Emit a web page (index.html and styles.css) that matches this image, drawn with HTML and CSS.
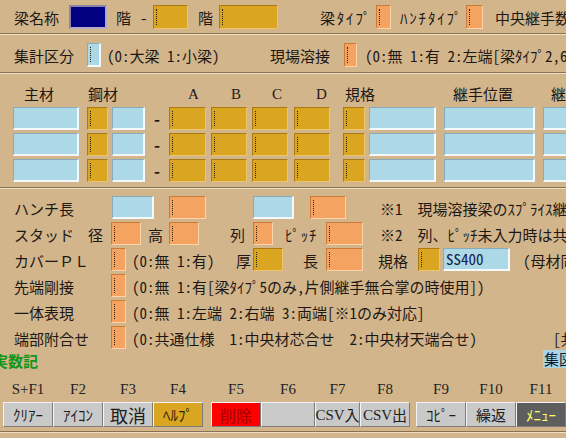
FILE: index.html
```html
<!DOCTYPE html>
<html lang="ja">
<head>
<meta charset="utf-8">
<title>梁名称</title>
<link rel="stylesheet" href="styles.css">
</head>
<body>
<div class="screen">
  <div class="row r1">
    <span class="txt w55">梁名称</span>
    <span class="box nv w38"></span>
    <span class="txt w33 pl9">階</span>
    <span class="txt w13">-</span>
    <span class="box gd c w35"></span>
    <span class="txt w31 pl10">階</span>
    <span class="box gd c w59"></span>
    <span class="txt w98 pl42 hk">梁ﾀｲﾌﾟ</span>
    <span class="box or c w15"></span>
    <span class="txt w75 pl9 hk">ﾊﾝﾁﾀｲﾌﾟ</span>
    <span class="box or c w17"></span>
    <span class="txt pl12">中央継手数</span>
  </div>
  <div class="sep s1"></div>
  <div class="row r2">
    <span class="txt w73">集計区分</span>
    <span class="box lb c w14"></span>
    <span class="txt w169 pl6">(0:大梁 1:小梁)</span>
    <span class="txt w74">現場溶接</span>
    <span class="box or c w13"></span>
    <span class="txt pl8">(0:無 1:有 2:左端[梁ﾀｲﾌﾟ2,6のみ] 3:右端)</span>
  </div>
  <div class="sep s2"></div>
  <div class="hdr">
    <span class="w64">主材</span>
    <span class="w100">鋼材</span>
    <span class="w43 ser">A</span>
    <span class="w41 ser">B</span>
    <span class="w44 ser">C</span>
    <span class="w29 ser">D</span>
    <span class="w108">規格</span>
    <span class="w98">継手位置</span>
    <span>継手</span>
  </div>
  <div class="inputs">
    <div class="row irow">
      <span class="box lb w66"></span>
      <span class="box gd c w21 ml8"></span>
      <span class="box lb w33 ml4"></span>
      <span class="txt w24 dash">-</span>
      <span class="box gd c w37"></span>
      <span class="box gd c w36 ml5"></span>
      <span class="box gd c w36 ml5"></span>
      <span class="box gd c w36 ml6"></span>
      <span class="box gd c w22 ml13"></span>
      <span class="box lb w67 ml4"></span>
      <span class="box lb w91 ml8"></span>
      <span class="box lb w40 ml8"></span>
    </div>
    <div class="row irow">
      <span class="box lb w66"></span>
      <span class="box gd c w21 ml8"></span>
      <span class="box lb w33 ml4"></span>
      <span class="txt w24 dash">-</span>
      <span class="box gd c w37"></span>
      <span class="box gd c w36 ml5"></span>
      <span class="box gd c w36 ml5"></span>
      <span class="box gd c w36 ml6"></span>
      <span class="box gd c w22 ml13"></span>
      <span class="box lb w67 ml4"></span>
      <span class="box lb w91 ml8"></span>
      <span class="box lb w40 ml8"></span>
    </div>
    <div class="row irow">
      <span class="box lb w66"></span>
      <span class="box gd c w21 ml8"></span>
      <span class="box lb w33 ml4"></span>
      <span class="txt w24 dash">-</span>
      <span class="box gd c w37"></span>
      <span class="box gd c w36 ml5"></span>
      <span class="box gd c w36 ml5"></span>
      <span class="box gd c w36 ml6"></span>
      <span class="box gd c w22 ml13"></span>
      <span class="box lb w67 ml4"></span>
      <span class="box lb w91 ml8"></span>
      <span class="box lb w40 ml8"></span>
    </div>
  </div>
  <div class="sep s3"></div>
  <div class="form">
    <div class="row frow">
      <span class="txt w98">ハンチ長</span>
      <span class="box lb w42"></span>
      <span class="box or c w37 ml15"></span>
      <span class="box lb w41 ml47"></span>
      <span class="box or c w36 ml16"></span>
      <span class="txt pl34">※1<span class="fw">　</span>現場溶接梁のｽﾌﾟﾗｲｽ継手</span>
    </div>
    <div class="row frow">
      <span class="txt w74">スタッド</span>
      <span class="txt w23">径</span>
      <span class="box or c w30"></span>
      <span class="txt w28 pl7">高</span>
      <span class="box or c w30"></span>
      <span class="txt w54 pl31">列</span>
      <span class="box or c w20"></span>
      <span class="txt w53 pl12 hk2">ﾋﾟｯﾁ</span>
      <span class="box or c w37"></span>
      <span class="txt pl17">※2<span class="fw">　</span>列、ﾋﾟｯﾁ未入力時は共通</span>
    </div>
    <div class="row frow">
      <span class="txt w97">カバー<span class="fw">ＰＬ</span></span>
      <span class="box or c w15"></span>
      <span class="txt w110 pl6">(0:無 1:有)</span>
      <span class="txt w17">厚</span>
      <span class="box gd c w30"></span>
      <span class="txt w43 pl20">長</span>
      <span class="box or c w37"></span>
      <span class="txt w55 pl15">規格</span>
      <span class="box gd c w22"></span>
      <span class="box lb w67 ml3 val">SS400</span>
      <span class="txt pl13">(母材同一時は空白)</span>
    </div>
    <div class="row frow">
      <span class="txt w97">先端剛接</span>
      <span class="box or c w15"></span>
      <span class="txt pl6">(0:無 1:有[梁ﾀｲﾌﾟ5のみ,片側継手無合掌の時使用])</span>
    </div>
    <div class="row frow">
      <span class="txt w97">一体表現</span>
      <span class="box or c w15"></span>
      <span class="txt pl6">(0:無 1:左端 2:右端 3:両端[※1のみ対応]</span>
    </div>
    <div class="row frow">
      <span class="txt w97">端部附合せ</span>
      <span class="box or c w15"></span>
      <span class="txt w427 pl6">(0:共通仕様<span class="fw">　</span>1:中央材芯合せ<span class="fw">　</span>2:中央材天端合せ)</span>
      <span class="txt">[共通]</span>
    </div>
  </div>
  <div class="row xrow">
    <span class="txt green">実数記</span>
    <span class="zu">集図</span>
  </div>
  <div class="fkeys">
    <div class="fgrp">
      <div class="fk w50"><span class="fl">S+F1</span><span class="btn">ｸﾘｱｰ</span></div>
      <div class="fk w50"><span class="fl">F2</span><span class="btn">ｱｲｺﾝ</span></div>
      <div class="fk w50"><span class="fl">F3</span><span class="btn big">取消</span></div>
      <div class="fk w50"><span class="fl">F4</span><span class="btn help">ﾍﾙﾌﾟ</span></div>
    </div>
    <div class="fgrp g2">
      <div class="fk w50"><span class="fl">F5</span><span class="btn del">削除</span></div>
      <div class="fk w54"><span class="fl">F6</span><span class="btn"></span></div>
      <div class="fk w45"><span class="fl">F7</span><span class="btn"><span class="ser">CSV</span>入</span></div>
      <div class="fk w50"><span class="fl">F8</span><span class="btn"><span class="ser">CSV</span>出</span></div>
    </div>
    <div class="fgrp g3">
      <div class="fk w50"><span class="fl">F9</span><span class="btn">ｺﾋﾟｰ</span></div>
      <div class="fk w50"><span class="fl">F10</span><span class="btn">繰返</span></div>
      <div class="fk w50"><span class="fl">F11</span><span class="btn menu">ﾒﾆｭｰ</span></div>
      <div class="fk w50"><span class="fl">F12</span><span class="btn">終了</span></div>
    </div>
  </div>
  <div class="sep s4"></div>
</div>
</body>
</html>
```
FILE: styles.css
```css
* { box-sizing: border-box; }
html, body { margin: 0; padding: 0; }
body {
  width: 566px;
  height: 438px;
  overflow: hidden;
  background: #D3B58C;
  color: #1c1814;
  font-family: "Noto Sans CJK JP", "Noto Sans", sans-serif;
  font-size: 15px;
  font-feature-settings: "hwid" 1;
}
.screen { width: 566px; padding-top: 5px; }

.row { display: flex; align-items: stretch; white-space: nowrap; }
.row > * { flex-shrink: 0; }
.txt { display: flex; align-items: center; line-height: 18px; padding-top: 2px; }
.fw { font-feature-settings: "hwid" 0; }

.r1 { height: 24px; padding-left: 14px; }
.r2 { height: 24px; padding-left: 14px; margin-top: 8px; }

.sep { height: 2px; border-top: 1px solid #8a7152; border-bottom: 1px solid #efdfc4; }
.s1 { margin-top: 4px; }
.s2 { margin-top: 5px; }
.s3 { margin-top: 5px; }
.s4 { margin-top: 4px; }

.hdr { display: flex; height: 16px; line-height: 16px; margin-top: 12px; padding-left: 24px; white-space: nowrap; }
.hdr > span { flex-shrink: 0; }
.ser { font-family: "Liberation Serif", serif; }

.inputs { margin-top: 5px; display: flex; flex-direction: column; gap: 3px; }
.irow { height: 23px; padding-left: 13px; }
.dash { justify-content: center; font-weight: bold; padding-top: 0; }

.form { margin-top: 7px; display: flex; flex-direction: column; gap: 3px; }
.frow { height: 23px; padding-left: 14px; }

.xrow { height: 18px; margin-top: 1px; }
.green { width: 550px; margin-left: -7px; color: #12961a; font-weight: bold; padding-top: 4px; }
.zu { display: flex; align-items: center; padding-left: 1px; background: #A9D6E6; color: #0e1a30; line-height: 18px; width: 40px; }

/* input boxes */
.box { display: flex; }
.lb { background: #ADD8E6; border-style: solid; border-width: 1px 2px 2px 1px; border-color: #88aabb #f2faff #f2faff #88aabb; }
.gd { background: #DAA520; border: 1px solid; border-color: #a87a12 #eec66a #eec66a #a87a12; }
.or { background: #F4A460; border: 1px solid; border-color: #c67c3c #ffd4aa #ffd4aa #c67c3c; }
.nv { background: #000080; border: 2px solid; border-color: #8c82a6 #b2aac4 #b2aac4 #8c82a6; }
.c::before { content: ""; width: 0; margin: 3px 0 3px 2px; border-left: 1px dotted #2a2010; }
.val { align-items: center; padding-left: 2px; color: #14204a; line-height: 18px; }

.hk { letter-spacing: 1.8px; }
.hk2 { letter-spacing: 0.8px; }

/* function keys */
.fkeys { display: flex; margin-top: 10px; padding-left: 3px; }
.fgrp { display: flex; flex-shrink: 0; }
.g2 { margin-left: 8px; }
.g3 { margin-left: 6px; }
.fk { display: flex; flex-direction: column; flex-shrink: 0; }
.fl { height: 20px; line-height: 22px; text-align: center; font-family: "Liberation Serif", serif; font-size: 15px; color: #222; }
.btn {
  margin-top: 4px;
  height: 25px;
  display: flex;
  align-items: center;
  justify-content: center;
  white-space: nowrap;
  background: #C9C9C9;
  border: 1px solid;
  border-color: #f4f4f4 #7c7c7c #7c7c7c #f4f4f4;
  color: #1e1e1e;
  line-height: 18px;
}
.big { font-size: 18px; }
.help { background: #DAA520; color: #2a1e08; }
.del { background: #FF0000; color: #a00000; font-size: 16px; }
.menu { background: #5e5e5e; color: #ffff66; }

/* widths */
.w13 { width: 13px; } .w14 { width: 14px; } .w15 { width: 15px; } .w17 { width: 17px; }
.w20 { width: 20px; } .w21 { width: 21px; } .w22 { width: 22px; } .w23 { width: 23px; }
.w24 { width: 24px; } .w28 { width: 28px; } .w29 { width: 29px; } .w30 { width: 30px; }
.w31 { width: 31px; } .w33 { width: 33px; } .w35 { width: 35px; } .w36 { width: 36px; }
.w37 { width: 37px; } .w38 { width: 38px; } .w40 { width: 40px; } .w41 { width: 41px; }
.w42 { width: 42px; } .w43 { width: 43px; } .w44 { width: 44px; } .w45 { width: 45px; }
.w50 { width: 50px; } .w53 { width: 53px; } .w54 { width: 54px; } .w55 { width: 55px; }
.w59 { width: 59px; } .w64 { width: 64px; } .w66 { width: 66px; } .w67 { width: 67px; }
.w73 { width: 73px; } .w74 { width: 74px; } .w75 { width: 75px; } .w91 { width: 91px; }
.w97 { width: 97px; } .w98 { width: 98px; } .w100 { width: 100px; } .w108 { width: 108px; }
.w110 { width: 110px; } .w169 { width: 169px; } .w427 { width: 427px; }

/* spacing */
.pl6 { padding-left: 6px; } .pl7 { padding-left: 7px; } .pl8 { padding-left: 8px; }
.pl9 { padding-left: 9px; } .pl10 { padding-left: 10px; } .pl12 { padding-left: 12px; }
.pl13 { padding-left: 13px; } .pl15 { padding-left: 15px; } .pl17 { padding-left: 17px; }
.pl20 { padding-left: 20px; } .pl31 { padding-left: 31px; } .pl34 { padding-left: 34px; }
.pl42 { padding-left: 42px; }
.ml3 { margin-left: 3px; } .ml4 { margin-left: 4px; } .ml5 { margin-left: 5px; }
.ml6 { margin-left: 6px; } .ml8 { margin-left: 8px; } .ml13 { margin-left: 13px; }
.ml15 { margin-left: 15px; } .ml16 { margin-left: 16px; } .ml47 { margin-left: 47px; }
```
